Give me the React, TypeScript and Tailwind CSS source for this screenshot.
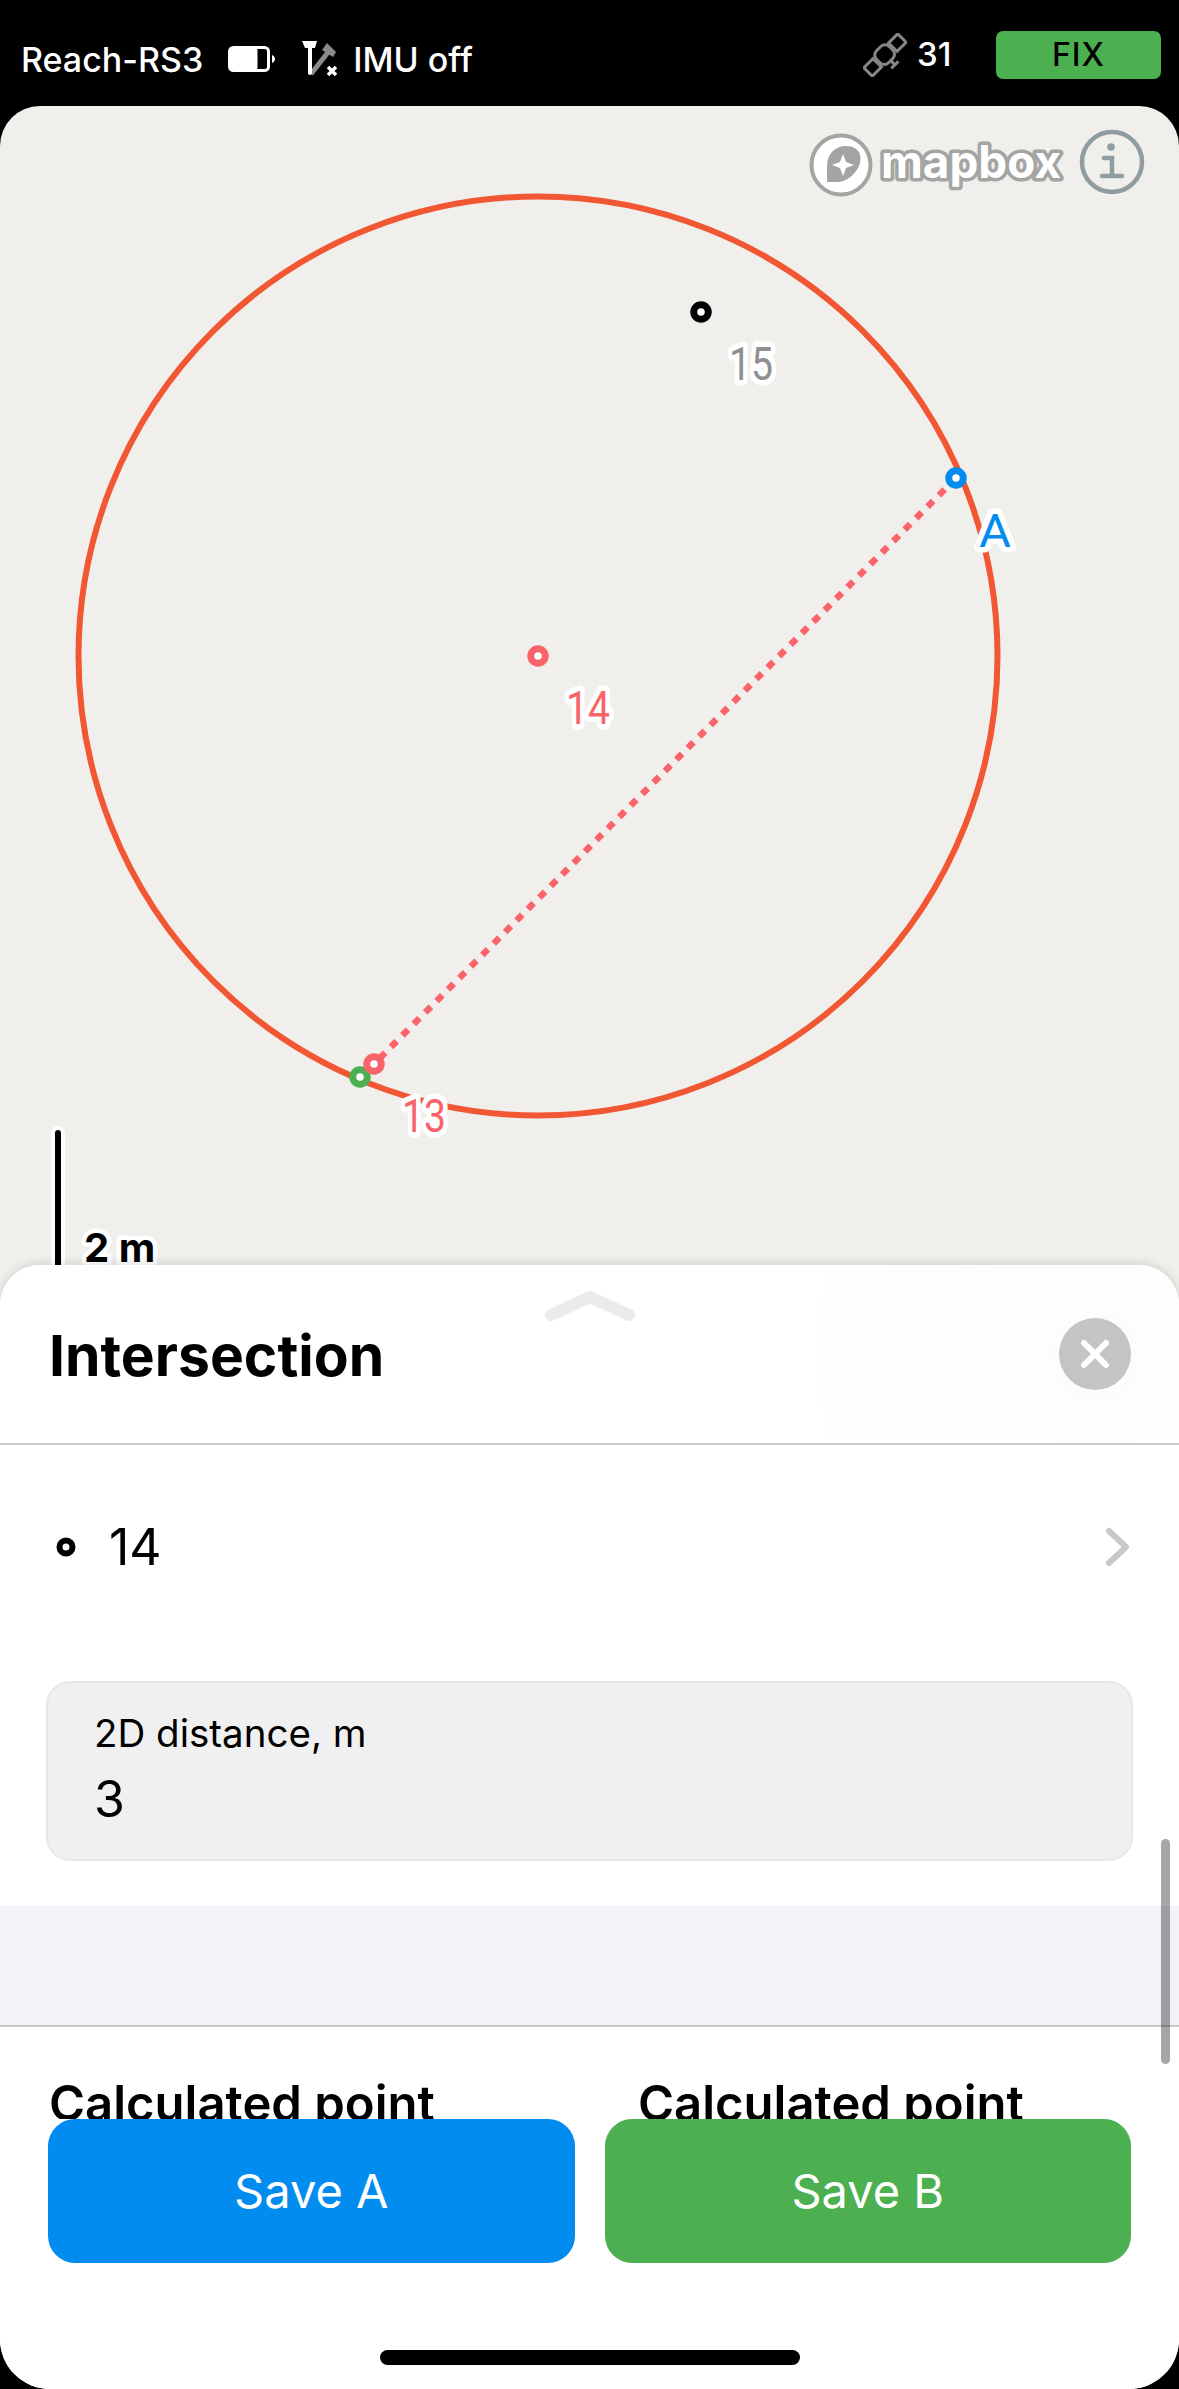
const labelFont = "Roboto, 'Liberation Sans', sans-serif";

function BatteryIcon() {
  return (
    <svg width="48" height="26" viewBox="0 0 48 26" className="shrink-0">
      <rect x="1.5" y="1.5" width="39" height="23" rx="4" fill="none" stroke="#fff" strokeWidth="3" />
      <rect x="1.5" y="1.5" width="28" height="23" rx="3" fill="#fff" />
      <path d="M44 9c2 1 3 2.5 3 4s-1 3-3 4z" fill="#fff" />
    </svg>
  );
}

function ImuIcon() {
  return (
    <svg width="38" height="37" viewBox="0 0 38 37" className="shrink-0">
      <path d="M9 33 27 10" stroke="#8a8a8a" strokeWidth="5" fill="none" />
      <path d="M25 2l9 9-3 5-11-7z" fill="#8a8a8a" />
      <path d="M0 0h15l-2 7h-3v25a2 2 0 0 1-4 0V7H3z" fill="#fff" />
      <path d="M26 26l8 8M34 26l-8 8" stroke="#fff" strokeWidth="3.5" fill="none" />
    </svg>
  );
}

function SatelliteIcon() {
  return (
    <svg width="44" height="44" viewBox="0 0 44 44" className="shrink-0">
      <g transform="rotate(-45 22 22)" fill="none" stroke="#858585" strokeWidth="3">
        <rect x="-2" y="16" width="13" height="12" />
        <rect x="33" y="16" width="13" height="12" />
        <rect x="13" y="13" width="18" height="17" rx="6" />
        <path d="M22 30v6M17 36h10" />
      </g>
    </svg>
  );
}

function MapboxLogo() {
  return (
    <svg width="256" height="66" viewBox="0 0 256 66" className="absolute left-[809px] top-[26px]">
      <circle cx="32" cy="33" r="29.5" fill="#fff" stroke="#a4a4a2" strokeWidth="4" />
      <path d="M18 50V34c0-12 8-20 19-20 7 0 11 3 13 6 2 4 2 9 0 14-4 9-13 16-22 16z" fill="#a4a4a2" />
      <path d="M34 22l3 8 8 3-8 3-3 8-3-8-8-3 8-3z" fill="#fff" />
      <text
        x="72"
        y="46"
        fontFamily="Inter, sans-serif"
        fontWeight="700"
        fontSize="45"
        textLength="180"
        lengthAdjust="spacingAndGlyphs"
        fill="#fff"
        stroke="#a4a4a2"
        strokeWidth="7"
        strokeLinejoin="round"
        paintOrder="stroke"
      >
        mapbox
      </text>
    </svg>
  );
}

function InfoIcon() {
  return (
    <svg width="66" height="66" viewBox="0 0 66 66" className="absolute left-[1079px] top-[23px]">
      <circle cx="33" cy="33" r="30" fill="none" stroke="#8f9ca0" strokeWidth="4.5" />
      <circle cx="32" cy="18" r="3.8" fill="#8f9ca0" />
      <path d="M25 29h8v18M23 47h20" fill="none" stroke="#8f9ca0" strokeWidth="4.5" strokeLinecap="round" />
    </svg>
  );
}

function Point({ x, y, color }: { x: number; y: number; color: string }) {
  return <circle cx={x} cy={y} r="7.25" fill="#fff" stroke={color} strokeWidth="7" />;
}

function Label({ x, y, color, width, children }: { x: number; y: number; color: string; width: number; children: string }) {
  return (
    <text
      x={x}
      y={y}
      textAnchor="middle"
      fontFamily={labelFont}
      fontWeight="400"
      fontSize="47"
      textLength={width}
      lengthAdjust="spacingAndGlyphs"
      fill={color}
      stroke="#fff"
      strokeWidth="11"
      strokeLinejoin="round"
      paintOrder="stroke"
    >
      {children}
    </text>
  );
}

function MapView() {
  return (
    <div className="relative h-[1200px] w-full shrink-0 overflow-hidden rounded-t-[40px] bg-[#f1efec]">
      {/* coords here are relative to the map, so page y minus 106 */}
      <svg width="1179" height="1200" viewBox="0 0 1179 1200" className="block">
        <circle cx="538" cy="550" r="459.5" fill="none" stroke="#f25733" strokeWidth="6" />
        <line x1="956" y1="372" x2="374" y2="958" stroke="#f9636a" strokeWidth="6.5" strokeDasharray="8 8.2" />
        <Label x={751} y={274} color="#8f8f94" width={44}>15</Label>
        <Label x={995} y={441} color="#038cf0" width={32}>A</Label>
        <Label x={588} y={618} color="#f9636a" width={44}>14</Label>
        <Label x={424} y={1026} color="#f9636a" width={44}>13</Label>
        <Point x={701} y={206} color="#000" />
        <Point x={956} y={372} color="#038cf0" />
        <Point x={538} y={550} color="#f9636a" />
        <Point x={360} y={971} color="#4caf50" />
        <Point x={374} y={958} color="#f9636a" />
        <line x1="58" y1="1027" x2="58" y2="1200" stroke="#fff" strokeWidth="14" strokeLinecap="round" />
        <line x1="58" y1="1027" x2="58" y2="1200" stroke="#000" strokeWidth="6" strokeLinecap="round" />
        <text
          x="84"
          y="1156"
          fontFamily="Inter, sans-serif"
          fontWeight="700"
          fontSize="40"
          fill="#000"
          stroke="#fff"
          strokeWidth="9"
          strokeLinejoin="round"
          paintOrder="stroke"
        >
          2 m
        </text>
      </svg>
      <MapboxLogo />
      <InfoIcon />
    </div>
  );
}

function SaveButton({ label, className }: { label: string; className: string }) {
  return (
    <button className={`flex h-[144px] flex-1 items-center justify-center rounded-[27px] text-[47px] text-white ${className}`}>
      {label}
    </button>
  );
}

export default function App() {
  return (
    <div className="flex h-[2389px] w-[1179px] flex-col overflow-hidden bg-black font-['Inter',sans-serif] text-black">
      <div className="flex h-[106px] shrink-0 items-center pl-[21px] pr-[18px] pt-[4px] text-[34px] font-medium text-white">
        <div className="mt-[8px] flex items-center">
          <span>Reach-RS3</span>
          <div className="ml-[25px]">
            <BatteryIcon />
          </div>
          <div className="ml-[26px]">
            <ImuIcon />
          </div>
          <span className="ml-[13px]">IMU off</span>
        </div>
        <div className="ml-auto">
          <SatelliteIcon />
        </div>
        <span className="ml-[10px] w-[45px] text-[33px]">31</span>
        <div className="ml-[34px] flex h-[48px] w-[165px] items-center justify-center rounded-[7px] bg-[#4caf50] text-[32px] tracking-[1px] text-black">
          FIX
        </div>
      </div>

      <MapView />

      <div className="relative z-10 -mt-[41px] flex min-h-0 flex-1 flex-col overflow-hidden rounded-t-[40px] rounded-b-[50px] bg-white shadow-[0_-2px_10px_rgba(0,0,0,0.12)]">
        <div className="relative h-[180px] shrink-0 border-b-2 border-[#c9c9cb] bg-[radial-gradient(circle_at_1095px_91px,#fcfcfc,#ffffff_300px)]">
          <svg width="90" height="30" viewBox="0 0 90 30" className="absolute left-[545px] top-[26px]">
            <path d="M6 24 45 6l39 18" fill="none" stroke="#ebebeb" strokeWidth="12" strokeLinecap="round" strokeLinejoin="round" />
          </svg>
          <div className="flex h-full items-center justify-between pl-[49px] pr-[48px]">
            <h1 className="mt-[3px] text-[57px] font-bold leading-none">Intersection</h1>
            <button className="flex h-[72px] w-[72px] items-center justify-center rounded-full bg-[#c4c4c4]">
              <svg width="30" height="30" viewBox="0 0 30 30">
                <path d="M4 4l22 22M26 4 4 26" stroke="#fff" strokeWidth="6" strokeLinecap="round" />
              </svg>
            </button>
          </div>
        </div>

        <div className="relative min-h-0 flex-1 overflow-hidden">
          <div className="flex h-[204px] items-center pl-[56px] pr-[50px]">
            <svg width="20" height="20" viewBox="0 0 20 20" className="shrink-0">
              <circle cx="10" cy="10" r="6.5" fill="#fff" stroke="#000" strokeWidth="6" />
            </svg>
            <span className="ml-[33px] text-[50px] leading-none">14</span>
            <svg width="24" height="40" viewBox="0 0 24 40" className="ml-auto">
              <path d="M4 4l17 16L4 36" fill="none" stroke="#c8c8c8" strokeWidth="6" strokeLinecap="round" strokeLinejoin="round" />
            </svg>
          </div>

          <div className="mx-[46px] mt-[32px] flex h-[180px] flex-col rounded-[24px] border-2 border-[#e7e7e7] bg-[#f0f0f0] px-[46px] pt-[28px]">
            <span className="text-[38.5px] leading-[44px]">2D distance, m</span>
            <span className="mt-[11px] text-[50px] leading-[66px]">3</span>
          </div>

          <div className="mt-[45px] h-[121px] border-b-2 border-[#c9c9cb] bg-[#f2f2f7]" />

          <div className="grid grid-cols-[589px_1fr] pl-[49px] pt-[52px] text-[49px] font-semibold leading-none">
            <span>Calculated point</span>
            <span>Calculated point</span>
          </div>

          <div className="absolute left-[1161px] top-[394px] h-[225px] w-[9px] rounded-full bg-black/35" />
        </div>

        <div className="h-[270px] shrink-0 bg-white px-[48px]">
          <div className="flex gap-[30px]">
            <SaveButton label="Save A" className="bg-[#038cf0]" />
            <SaveButton label="Save B" className="bg-[#4caf50]" />
          </div>
          <div className="mx-auto mt-[87px] h-[15px] w-[420px] rounded-full bg-black" />
        </div>
      </div>
    </div>
  );
}
